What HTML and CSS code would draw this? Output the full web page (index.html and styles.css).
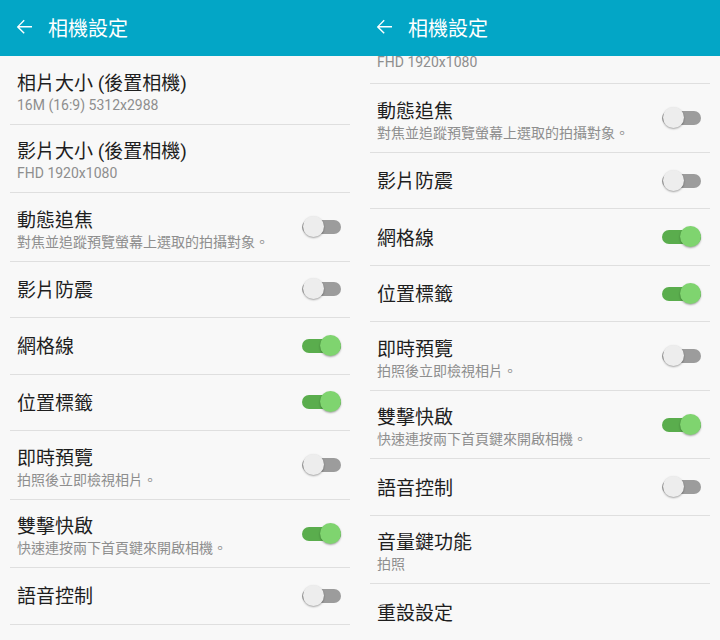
FILE: index.html
```html
<!DOCTYPE html>
<html lang="zh-Hant">
<head>
<meta charset="utf-8">
<title>相機設定</title>
<link rel="stylesheet" href="styles.css">
</head>
<body>
<div class="screen">
  <header class="appbar">
    <svg class="back" viewBox="0 0 24 24" width="24" height="24"><path d="M20 11.1H7.4l5.3-5.3-1-1L4.8 11.9l6.9 6.9 1-1-5.3-5.3H20z" fill="#fff"/></svg>
    <span class="appbar-title">相機設定</span>
  </header>
  <div class="viewport">
    <ul class="list">
      <li class="row two"><div class="text"><div class="title">相片大小 (後置相機)</div><div class="sub">16M (16:9) 5312x2988</div></div></li>
      <li class="row two"><div class="text"><div class="title">影片大小 (後置相機)</div><div class="sub">FHD 1920x1080</div></div></li>
      <li class="row two"><div class="text"><div class="title">動態追焦</div><div class="sub">對焦並追蹤預覽螢幕上選取的拍攝對象。</div></div><span class="switch"><span class="track"></span><span class="thumb"></span></span></li>
      <li class="row one"><div class="text"><div class="title">影片防震</div></div><span class="switch"><span class="track"></span><span class="thumb"></span></span></li>
      <li class="row one"><div class="text"><div class="title">網格線</div></div><span class="switch on"><span class="track"></span><span class="thumb"></span></span></li>
      <li class="row one"><div class="text"><div class="title">位置標籤</div></div><span class="switch on"><span class="track"></span><span class="thumb"></span></span></li>
      <li class="row two"><div class="text"><div class="title">即時預覽</div><div class="sub">拍照後立即檢視相片。</div></div><span class="switch"><span class="track"></span><span class="thumb"></span></span></li>
      <li class="row two"><div class="text"><div class="title">雙擊快啟</div><div class="sub">快速連按兩下首頁鍵來開啟相機。</div></div><span class="switch on"><span class="track"></span><span class="thumb"></span></span></li>
      <li class="row one"><div class="text"><div class="title">語音控制</div></div><span class="switch"><span class="track"></span><span class="thumb"></span></span></li>
    </ul>
  </div>
</div>
<div class="screen">
  <header class="appbar">
    <svg class="back" viewBox="0 0 24 24" width="24" height="24"><path d="M20 11.1H7.4l5.3-5.3-1-1L4.8 11.9l6.9 6.9 1-1-5.3-5.3H20z" fill="#fff"/></svg>
    <span class="appbar-title">相機設定</span>
  </header>
  <div class="viewport">
    <ul class="list">
      <li class="row partial"><div class="text"><div class="sub">FHD 1920x1080</div></div></li>
      <li class="row two"><div class="text"><div class="title">動態追焦</div><div class="sub">對焦並追蹤預覽螢幕上選取的拍攝對象。</div></div><span class="switch"><span class="track"></span><span class="thumb"></span></span></li>
      <li class="row one"><div class="text"><div class="title">影片防震</div></div><span class="switch"><span class="track"></span><span class="thumb"></span></span></li>
      <li class="row one"><div class="text"><div class="title">網格線</div></div><span class="switch on"><span class="track"></span><span class="thumb"></span></span></li>
      <li class="row one"><div class="text"><div class="title">位置標籤</div></div><span class="switch on"><span class="track"></span><span class="thumb"></span></span></li>
      <li class="row two"><div class="text"><div class="title">即時預覽</div><div class="sub">拍照後立即檢視相片。</div></div><span class="switch"><span class="track"></span><span class="thumb"></span></span></li>
      <li class="row two"><div class="text"><div class="title">雙擊快啟</div><div class="sub">快速連按兩下首頁鍵來開啟相機。</div></div><span class="switch on"><span class="track"></span><span class="thumb"></span></span></li>
      <li class="row one"><div class="text"><div class="title">語音控制</div></div><span class="switch"><span class="track"></span><span class="thumb"></span></span></li>
      <li class="row two"><div class="text"><div class="title">音量鍵功能</div><div class="sub">拍照</div></div></li>
      <li class="row one"><div class="text"><div class="title">重設設定</div></div></li>
    </ul>
  </div>
</div>
</body>
</html>
```

FILE: styles.css
```css
* { box-sizing: border-box; }
html, body { margin: 0; padding: 0; }
body {
  display: flex;
  width: 720px;
  height: 640px;
  overflow: hidden;
  background: #f8f8f8;
  font-family: "Roboto", "Noto Sans CJK TC", sans-serif;
}
.screen {
  width: 360px;
  height: 640px;
  display: flex;
  flex-direction: column;
  background: #f8f8f8;
}
.appbar {
  height: 56px;
  flex: none;
  background: #03a6c6;
  display: flex;
  align-items: center;
  padding-left: 12px;
  padding-top: 1px;
}
.back { display: block; flex: none; margin-top: -3px; }
.appbar-title {
  margin-left: 12px;
  color: #fff;
  font-size: 20px;
  line-height: 24px;
}
.viewport {
  flex: 1;
  overflow: hidden;
}
.list {
  list-style: none;
  margin: 0;
  padding: 0 10px;
}
.row {
  display: flex;
  align-items: center;
  border-bottom: 1px solid #dfdfdf;
  padding: 0 9px 0 7px;
}
.row.partial { height: 28.4px; align-items: flex-start; padding-top: 0.3px; }
.row.partial .sub { line-height: 13px; }
.row.two { height: 68.5px; align-items: flex-start; padding-top: 15.5px; }
.row.two .switch { align-self: center; margin-top: -15px; }
.row.one { height: 56.5px; padding-top: 3px; }
.row.one .switch { margin-top: -3px; }
.text { flex: 1; min-width: 0; }
.title {
  font-size: 19px;
  line-height: 24px;
  color: #1e1e1e;
  white-space: nowrap;
}
.sub {
  font-size: 14px;
  line-height: 19px;
  color: #8e8e8e;
  white-space: nowrap;
}
.switch {
  position: relative;
  flex: none;
  width: 39px;
  height: 22px;
}
.track {
  position: absolute;
  left: 0;
  right: 0;
  top: 4px;
  height: 14px;
  border-radius: 7px;
  background: #9c9c9c;
}
.thumb {
  position: absolute;
  top: 0;
  left: 1px;
  width: 21px;
  height: 21px;
  border-radius: 50%;
  background: #ededed;
  box-shadow: 0 1px 2px rgba(0,0,0,0.35);
}
.switch.on .track { background: #5aad4d; }
.switch.on .thumb {
  left: auto;
  right: 0;
  background: #7fd46f;
}
```
